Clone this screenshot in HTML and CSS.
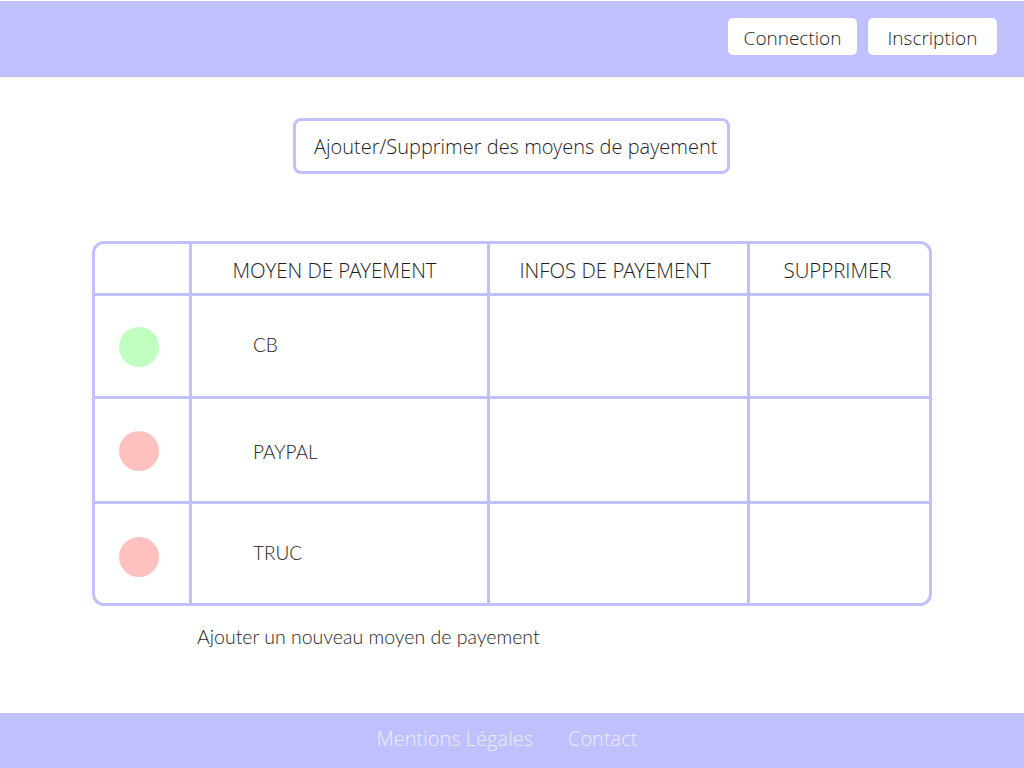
FILE: index.html
```html
<!DOCTYPE html>
<html lang="fr">
<head>
<meta charset="utf-8">
<title>Moyens de payement</title>
<link rel="stylesheet" href="styles.css">
</head>
<body>
<header class="topbar">
  <a class="btn" href="#">Connection</a>
  <a class="btn" href="#">Inscription</a>
</header>
<main class="content">
  <div class="title-box">Ajouter/Supprimer des moyens de payement</div>
  <div class="table">
    <div class="cell head"></div>
    <div class="cell head shift-lg">MOYEN DE PAYEMENT</div>
    <div class="cell head shift-md">INFOS DE PAYEMENT</div>
    <div class="cell head shift-sm last">SUPPRIMER</div>

    <div class="cell status r1"><span class="dot green"></span></div>
    <div class="cell name r1">CB</div>
    <div class="cell r1"></div>
    <div class="cell last r1"></div>

    <div class="cell status r2"><span class="dot red"></span></div>
    <div class="cell name r2">PAYPAL</div>
    <div class="cell r2"></div>
    <div class="cell last r2"></div>

    <div class="cell status r3 bottom"><span class="dot red"></span></div>
    <div class="cell name r3 bottom">TRUC</div>
    <div class="cell r3 bottom"></div>
    <div class="cell last r3 bottom"></div>
  </div>
  <a class="add-link" href="#">Ajouter un nouveau moyen de payement</a>
</main>
<footer class="footer">
  <a href="#">Mentions Légales</a>
  <a href="#">Contact</a>
</footer>
</body>
</html>
```
FILE: styles.css
```css
* { box-sizing: border-box; }
html, body { margin: 0; padding: 0; }
body {
  width: 1024px;
  height: 768px;
  display: flex;
  flex-direction: column;
  font-family: "Open Sans Light", "Open Sans", "Liberation Sans", sans-serif;
  font-weight: 300;
  color: #1e1e1e;
  background: #fff;
  overflow: hidden;
}
a { text-decoration: none; color: inherit; }

.topbar {
  margin-top: 1px;
  height: 76px;
  background: #c0c0fe;
  display: flex;
  justify-content: flex-end;
  align-items: flex-start;
  gap: 11px;
  padding: 17px 27px 0 0;
}
.btn {
  width: 129px;
  height: 37px;
  background: #fff;
  border-radius: 5px;
  display: flex;
  align-items: center;
  justify-content: center;
  font-size: 19px;
  padding-top: 2px;
  color: #1e1e1e;
}

.content {
  flex: 1;
  display: flex;
  flex-direction: column;
  align-items: center;
  padding-top: 41px;
}
.title-box {
  width: 437px;
  height: 56px;
  margin-left: -1px;
  border: 3px solid #c0c0fe;
  border-radius: 8px;
  display: flex;
  align-items: center;
  padding-left: 18px;
  font-size: 20px;
  white-space: nowrap;
}

.table {
  margin-top: 67px;
  width: 840px;
  border: 3px solid #c0c0fe;
  border-radius: 12px;
  display: grid;
  grid-template-columns: 97px 298px 260px 179px;
  grid-template-rows: 52px 103px 105px 99px;
}
.cell {
  border-right: 3px solid #c0c0fe;
  border-bottom: 3px solid #c0c0fe;
  display: flex;
  align-items: center;
  font-size: 20px;
}
.cell.last { border-right: none; }
.cell.bottom { border-bottom: none; }
.cell.head {
  justify-content: center;
  padding-top: 2px;
  font-size: 20.4px;
}
.cell.head.shift-lg { padding-right: 10px; }
.cell.head.shift-md { padding-right: 7px; }
.cell.head.shift-sm { padding-right: 4px; }
.cell.status { padding-left: 24px; padding-top: 2px; }
.cell.r3.status { padding-top: 6px; }
.cell.name {
  padding-left: 61px;
  font-family: "Lato Light", "Lato", "Open Sans", sans-serif;
  font-weight: 300;
  font-size: 19px;
  color: #222;
}
.cell.r1.name { padding-bottom: 3px; }
.cell.r2.name { padding-top: 2px; }
.cell.r3.name { padding-bottom: 2px; }
.dot {
  width: 40px;
  height: 40px;
  border-radius: 50%;
  display: block;
}
.dot.green { background: #c0ffc0; }
.dot.red { background: #ffc0c0; }

.add-link {
  align-self: flex-start;
  margin: 19px 0 0 197px;
  font-family: "Lato Light", "Lato", "Open Sans", sans-serif;
  font-weight: 300;
  font-size: 19.5px;
  color: #1e1e1e;
}

.footer {
  height: 55px;
  background: #c0c0fe;
  display: flex;
  justify-content: center;
  align-items: center;
  gap: 35px;
  padding: 0 10px 5px 0;
  font-size: 20px;
}
.footer a { color: #eeeeff; }
```
